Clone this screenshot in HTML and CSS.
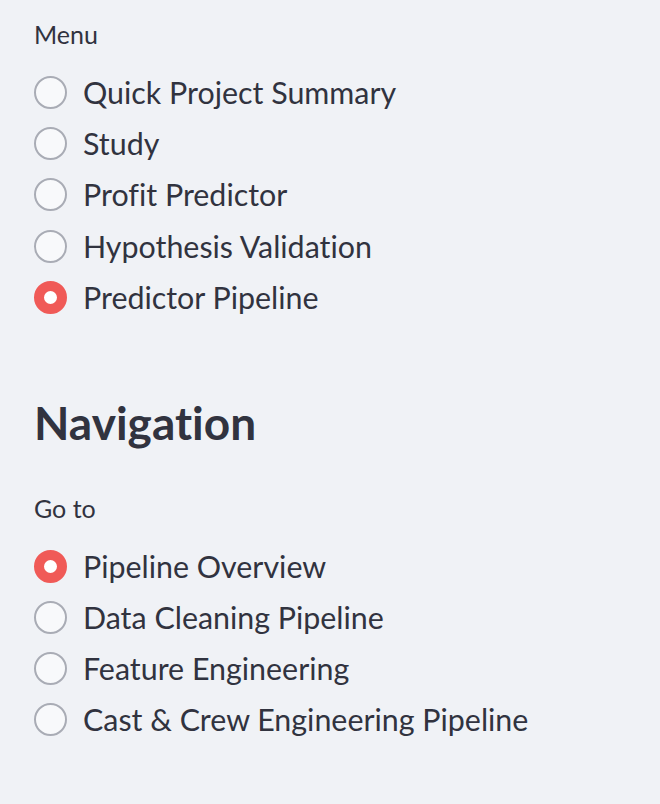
FILE: index.html
```html
<!DOCTYPE html>
<html lang="en">
<head>
<meta charset="utf-8">
<title>Sidebar</title>
<link rel="stylesheet" href="styles.css">
</head>
<body>
<aside class="sidebar">
  <div class="radio-group">
    <div class="label">Menu</div>
    <div class="options">
      <div class="option"><span class="dot"></span><span class="text">Quick Project Summary</span></div>
      <div class="option"><span class="dot"></span><span class="text">Study</span></div>
      <div class="option"><span class="dot"></span><span class="text">Profit Predictor</span></div>
      <div class="option"><span class="dot"></span><span class="text">Hypothesis Validation</span></div>
      <div class="option selected"><span class="dot"></span><span class="text">Predictor Pipeline</span></div>
    </div>
  </div>
  <h2 class="heading">Navigation</h2>
  <div class="radio-group">
    <div class="label">Go to</div>
    <div class="options">
      <div class="option selected"><span class="dot"></span><span class="text">Pipeline Overview</span></div>
      <div class="option"><span class="dot"></span><span class="text">Data Cleaning Pipeline</span></div>
      <div class="option"><span class="dot"></span><span class="text">Feature Engineering</span></div>
      <div class="option"><span class="dot"></span><span class="text">Cast &amp; Crew Engineering Pipeline</span></div>
    </div>
  </div>
</aside>
</body>
</html>
```
FILE: styles.css
```css
html, body {
  margin: 0;
  padding: 0;
  background: #f0f2f6;
}
body {
  font-family: Lato, "Source Sans Pro", "Noto Sans", sans-serif;
  font-variant-ligatures: none;
  color: #31333f;
  width: 660px;
  height: 804px;
  overflow: hidden;
}
.sidebar {
  padding: 14px 0 0 34px;
}
.label {
  font-size: 25px;
  line-height: 40px;
  height: 40px;
}
.options {
  margin-top: 13px;
  display: flex;
  flex-direction: column;
}
.option {
  display: flex;
  align-items: center;
  height: 51.2px;
}
.dot {
  box-sizing: border-box;
  width: 33px;
  height: 33px;
  border-radius: 50%;
  border: 2px solid #a9acb5;
  background: #f8f9fb;
  flex: none;
  margin-right: 16px;
}
.option.selected .dot {
  border: 10px solid #f05a57;
  background: #ffffff;
}
.text {
  font-size: 30.4px;
  line-height: 51.2px;
}
.heading {
  margin: 71px 0 36px 0;
  font-size: 46px;
  line-height: 57.6px;
  height: 57.6px;
  font-weight: 700;
}
```
